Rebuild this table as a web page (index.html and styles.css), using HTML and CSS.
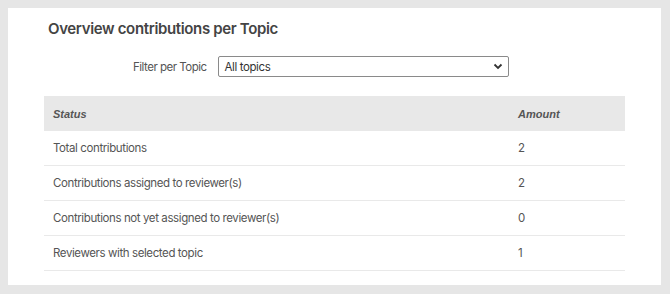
FILE: index.html
```html
<!DOCTYPE html>
<html>
<head>
<meta charset="utf-8">
<link rel="stylesheet" href="styles.css">
</head>
<body>
<div class="panel">
  <h2 class="title">Overview contributions per Topic</h2>
  <div class="filter">
    <span class="filter-label">Filter per Topic</span>
    <div class="select">
      <span class="select-value">All topics</span>
      <svg class="chevron" width="10" height="7" viewBox="0 0 10 7"><path d="M1.5 1.5 L5 5 L8.5 1.5" fill="none" stroke="#333" stroke-width="1.8"/></svg>
    </div>
  </div>
  <table class="stats">
    <thead>
      <tr><th class="col-status">Status</th><th class="col-amount">Amount</th></tr>
    </thead>
    <tbody>
      <tr><td>Total contributions</td><td class="num">2</td></tr>
      <tr><td>Contributions assigned to reviewer(s)</td><td class="num">2</td></tr>
      <tr><td>Contributions not yet assigned to reviewer(s)</td><td class="num">0</td></tr>
      <tr><td>Reviewers with selected topic</td><td class="num">1</td></tr>
    </tbody>
  </table>
</div>
</body>
</html>
```
FILE: styles.css
```css
html, body {
  margin: 0;
  padding: 0;
}
body {
  background: #e6e6e6;
  padding: 8px 9px 9px 8px;
  font-family: Inter, "Open Sans", sans-serif;
}
.panel {
  background: #fff;
  padding: 12px 36px 15px 36px;
  height: 250px;
}
.title {
  margin: 0 0 0 4px;
  font-size: 15px;
  font-weight: 600;
  color: #444;
  letter-spacing: -0.35px;
  line-height: 18px;
}
.filter {
  display: flex;
  align-items: center;
  margin-top: 18px;
  padding-left: 89px;
}
.filter-label {
  font-size: 11.5px;
  color: #555;
  letter-spacing: -0.5px;
  margin-right: 11px;
}
.select {
  height: 19px;
  border: 1px solid #8a8a8a;
  border-radius: 2px;
  display: flex;
  align-items: center;
  justify-content: space-between;
  padding: 0 5px 0 6px;
  box-sizing: content-box;
  width: 278px;
}
.select-value {
  font-size: 11.5px;
  color: #333;
  letter-spacing: -0.4px;
}
.chevron {
  display: block;
}
.stats {
  margin-top: 19px;
  width: 100%;
  border-collapse: collapse;
}
.stats th {
  background: #e8e8e8;
  height: 35px;
  padding: 0 9px;
  text-align: left;
  font-family: "Liberation Sans", Arial, sans-serif;
  font-size: 11px;
  font-weight: bold;
  font-style: italic;
  color: #555;
}
.stats td {
  height: 34px;
  padding: 0 9px;
  border-bottom: 1px solid #e9e9e9;
  font-size: 11.5px;
  color: #555;
  letter-spacing: -0.4px;
}
.stats .col-amount,
.stats .num {
  width: 98px;
}
```
